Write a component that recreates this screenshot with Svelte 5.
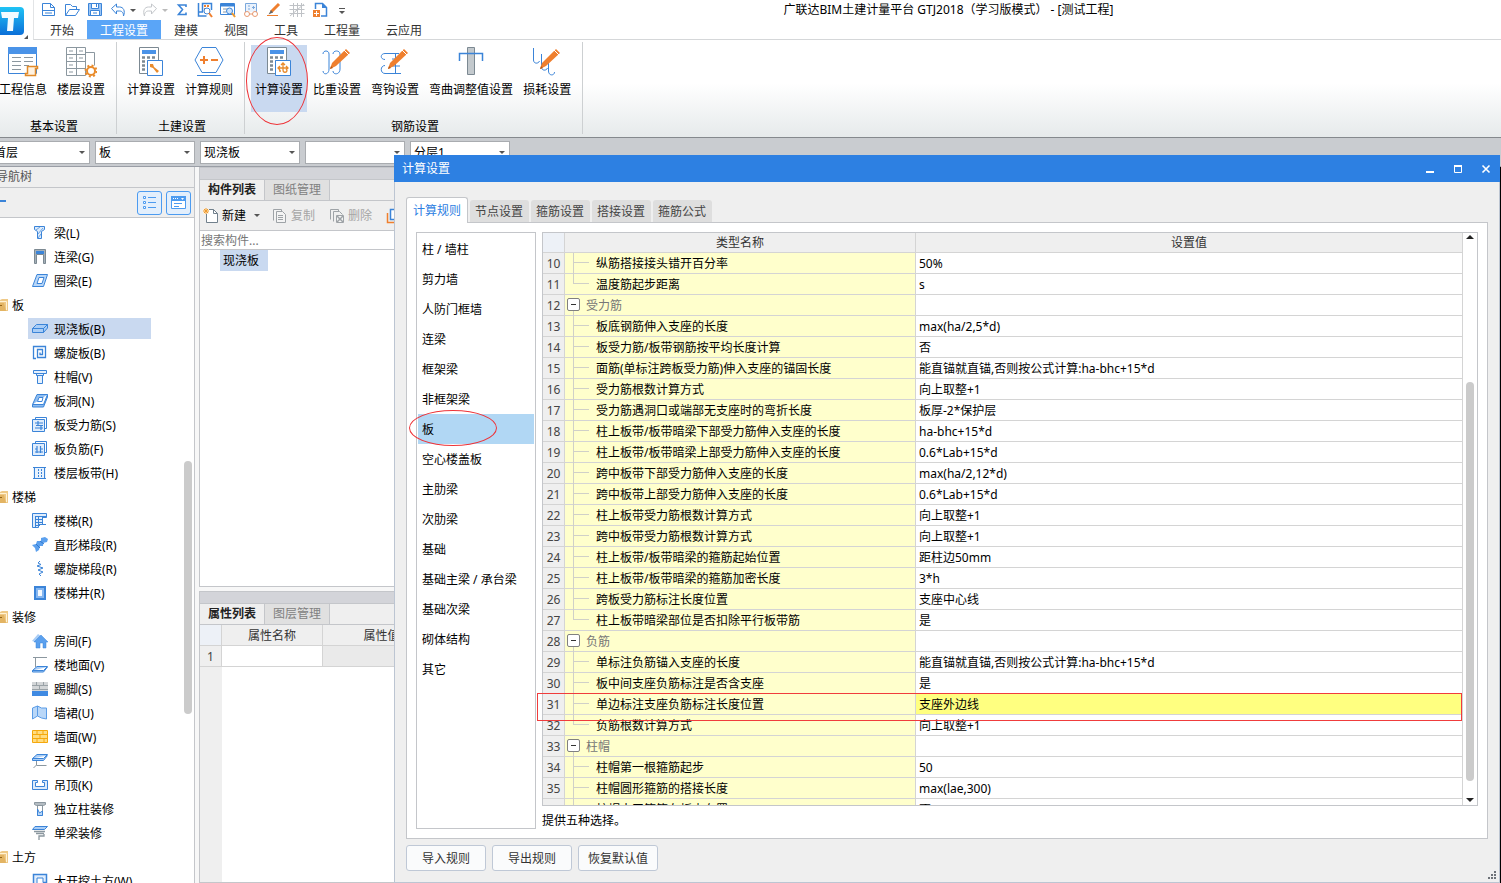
<script lang="ts">
  type TreeItem = { label: string; icon?: string }
  type Rule = { no: number; name: string; value?: string; group?: boolean; last?: boolean }

  const quickIcons = ['new', 'open', 'save', 'undo', 'redo', 'sum', 'calc', 'view', 'glasses', 'brush', 'mesh', 'export']

  const menuTabs = ['开始', '工程设置', '建模', '视图', '工具', '工程量', '云应用']
  let menuTab = $state('工程设置')

  const ribbonGroups = [
    {
      name: '基本设置',
      items: [
        { label: '工程信息', icon: 'info' },
        { label: '楼层设置', icon: 'floors' }
      ]
    },
    {
      name: '土建设置',
      items: [
        { label: '计算设置', icon: 'calcTool' },
        { label: '计算规则', icon: 'hexagon' }
      ]
    },
    {
      name: '钢筋设置',
      items: [
        { label: '计算设置', icon: 'calcRebar', active: true },
        { label: '比重设置', icon: 'weight' },
        { label: '弯钩设置', icon: 'hook' },
        { label: '弯曲调整值设置', icon: 'bend' },
        { label: '损耗设置', icon: 'loss' }
      ]
    }
  ]

  const filters = [
    { label: '楼层', value: '首层' },
    { label: '构件类型', value: '板' },
    { label: '构件', value: '现浇板' },
    { label: '名称', value: '' },
    { label: '分层', value: '分层1' }
  ]

  const tree: TreeItem[] = [
    { label: '梁(L)', icon: 'beam' },
    { label: '连梁(G)', icon: 'link' },
    { label: '圈梁(E)', icon: 'ring' },
    { label: '板' },
    { label: '现浇板(B)', icon: 'slab' },
    { label: '螺旋板(B)', icon: 'spiral' },
    { label: '柱帽(V)', icon: 'cap' },
    { label: '板洞(N)', icon: 'hole' },
    { label: '板受力筋(S)', icon: 'mainBar' },
    { label: '板负筋(F)', icon: 'topBar' },
    { label: '楼层板带(H)', icon: 'strip' },
    { label: '楼梯' },
    { label: '楼梯(R)', icon: 'stair' },
    { label: '直形梯段(R)', icon: 'flight' },
    { label: '螺旋梯段(R)', icon: 'helix' },
    { label: '楼梯井(R)', icon: 'well' },
    { label: '装修' },
    { label: '房间(F)', icon: 'room' },
    { label: '楼地面(V)', icon: 'ground' },
    { label: '踢脚(S)', icon: 'skirting' },
    { label: '墙裙(U)', icon: 'dado' },
    { label: '墙面(W)', icon: 'wall' },
    { label: '天棚(P)', icon: 'ceiling' },
    { label: '吊顶(K)', icon: 'hung' },
    { label: '独立柱装修', icon: 'column' },
    { label: '单梁装修', icon: 'beamDecor' },
    { label: '土方' },
    { label: '大开挖土方(W)', icon: 'dig' }
  ]
  let treeItem = $state('现浇板(B)')

  const dialogTabs = ['计算规则', '节点设置', '箍筋设置', '搭接设置', '箍筋公式']
  let dialogTab = $state('计算规则')

  const categories = [
    '柱 / 墙柱', '剪力墙', '人防门框墙', '连梁', '框架梁', '非框架梁', '板', '空心楼盖板',
    '主肋梁', '次肋梁', '基础', '基础主梁 / 承台梁', '基础次梁', '砌体结构', '其它'
  ]
  let category = $state('板')

  const rules: Rule[] = [
    { no: 10, name: '纵筋搭接接头错开百分率', value: '50%' },
    { no: 11, name: '温度筋起步距离', value: 's', last: true },
    { no: 12, name: '受力筋', group: true },
    { no: 13, name: '板底钢筋伸入支座的长度', value: 'max(ha/2,5*d)' },
    { no: 14, name: '板受力筋/板带钢筋按平均长度计算', value: '否' },
    { no: 15, name: '面筋(单标注跨板受力筋)伸入支座的锚固长度', value: '能直锚就直锚,否则按公式计算:ha-bhc+15*d' },
    { no: 16, name: '受力筋根数计算方式', value: '向上取整+1' },
    { no: 17, name: '受力筋遇洞口或端部无支座时的弯折长度', value: '板厚-2*保护层' },
    { no: 18, name: '柱上板带/板带暗梁下部受力筋伸入支座的长度', value: 'ha-bhc+15*d' },
    { no: 19, name: '柱上板带/板带暗梁上部受力筋伸入支座的长度', value: '0.6*Lab+15*d' },
    { no: 20, name: '跨中板带下部受力筋伸入支座的长度', value: 'max(ha/2,12*d)' },
    { no: 21, name: '跨中板带上部受力筋伸入支座的长度', value: '0.6*Lab+15*d' },
    { no: 22, name: '柱上板带受力筋根数计算方式', value: '向上取整+1' },
    { no: 23, name: '跨中板带受力筋根数计算方式', value: '向上取整+1' },
    { no: 24, name: '柱上板带/板带暗梁的箍筋起始位置', value: '距柱边50mm' },
    { no: 25, name: '柱上板带/板带暗梁的箍筋加密长度', value: '3*h' },
    { no: 26, name: '跨板受力筋标注长度位置', value: '支座中心线' },
    { no: 27, name: '柱上板带暗梁部位是否扣除平行板带筋', value: '是', last: true },
    { no: 28, name: '负筋', group: true },
    { no: 29, name: '单标注负筋锚入支座的长度', value: '能直锚就直锚,否则按公式计算:ha-bhc+15*d' },
    { no: 30, name: '板中间支座负筋标注是否含支座', value: '是' },
    { no: 31, name: '单边标注支座负筋标注长度位置', value: '支座外边线' },
    { no: 32, name: '负筋根数计算方式', value: '向上取整+1', last: true },
    { no: 33, name: '柱帽', group: true },
    { no: 34, name: '柱帽第一根箍筋起步', value: '50' },
    { no: 35, name: '柱帽圆形箍筋的搭接长度', value: 'max(lae,300)' },
    { no: 36, name: '柱帽水平箍筋在板内布置', value: '否' }
  ]

  // 16x16 glyphs
  const small: Record<string, string> = {
    new: '<path d="M1.500 1.500h8l4 4v8h-12z" fill="#fff" stroke="#3b84d8"/><path d="M9.500 1.500v4h4M2 8.500h11M4 11h7" fill="none" stroke="#3b84d8"/>',
    open: '<path d="M1.500 13.500v-11h5l2 2h4v3M1.500 13.500l4-6h10l-4 6z" fill="#fff" stroke="#3b84d8"/>',
    save: '<path d="M1.500 1.500h13v12h-13z" fill="#9dc6f5" stroke="#3b84d8"/><path d="M4.500 1.500h7v5h-7zM3.500 8.500h9v5h-9z" fill="#fff" stroke="#3b84d8"/><path d="M9.500 2v3M6 11h4" stroke="#3b84d8"/>',
    undo: '<path d="M1.500 6.500l5-4.500v3h3c4 0 6 4 4 9 0-4-2-5-4-5h-3v3z" fill="#fff" stroke="#3b84d8"/>',
    redo: '<path d="M14.500 6.500l-5-4.500v3h-3c-4 0-6 4-4 9 0-4 2-5 4-5h3v3z" fill="#fff" stroke="#c4c7cb"/>',
    sum: '<path d="M12 5V3H4.500l4 4.500-4 5H12v-2" fill="none" stroke="#3b84d8" stroke-width="1.600"/>',
    calc: '<path d="M1.500 1v13h8M1.500 10h4V1.500h9V8" fill="none" stroke="#3b84d8" stroke-width="1.500"/><path d="M7 4h6M7 7h3" stroke="#ef7f2e" stroke-width="2" stroke-dasharray="2 1"/><circle cx="10" cy="9" r="3" fill="#fff" stroke="#3b84d8"/><path d="M12 11l3 4" stroke="#ef7f2e" stroke-width="2"/>',
    view: '<path d="M.500 1.500h14v11H.500z" fill="#fff" stroke="#3b84d8"/><path d="M1 3h13" stroke="#3b84d8" stroke-width="3"/><path d="M3 7h4M3 10h3" stroke="#8796a3"/><circle cx="9.500" cy="9" r="3" fill="#cfe4fb" stroke="#3b84d8"/><path d="M12 11l3 4" stroke="#ef9b2e" stroke-width="2"/>',
    glasses: '<path d="M2.500 10V1.500h11V10" fill="#eaf2fc" stroke="#7ba8dc"/><path d="M5 4h2M5 7h2M9 5.500h3M10.500 4v3" stroke="#7ba8dc"/><circle cx="4" cy="12" r="2.500" fill="#fff" stroke="#e89a72"/><circle cx="12" cy="12" r="2.500" fill="#fff" stroke="#e89a72"/><path d="M6 12h4" stroke="#e89a72"/>',
    brush: '<path d="M13 2L5 10" stroke="#ef7f2e" stroke-width="3"/><path d="M5 8l-2.500 4.500 4.500-2z" fill="#666"/><path d="M1 13.500h11" stroke="#ef7f2e"/>',
    mesh: '<path d="M4.500 1v14M8.500 1v14M12.500 1v14M.500 3.500h15M.500 7.500h15M.500 11.500h15M1 14L15 2" stroke="#bfc2c6" fill="none"/>',
    export: '<path d="M3.500 7V1.500h7l4 4v8.500H9" fill="#fff" stroke="#3b84d8" stroke-width="1.500"/><path d="M10 1v5h5" fill="#3b84d8"/><path d="M1 8h7v7H1z" fill="#ef7f2e"/><path d="M2 11.500h5M4.500 9v5" stroke="#fff"/>',
    beam: '<path d="M2.500 1.500h10v3l-3 2v7h-4v-7l-3-2z" fill="#dcebfb" stroke="#3b84d8"/><path d="M4 5l4-3M6 9l5-6M6 13l3-4" stroke="#3b84d8" stroke-width=".700"/>',
    link: '<path d="M2.500 .500h11v14h-2V5.500h-7v9h-2z" fill="#a5b0b8" stroke="#7c8992"/><path d="M4 3.500h8" stroke="#3b84d8" stroke-width="3"/>',
    ring: '<path d="M5 1.500h10.500l-4 12H.500z" fill="#b9d7f8" stroke="#3b84d8"/><path d="M7 4.500h5l-2 6H5z" fill="#fff" stroke="#3b84d8"/>',
    slab: '<path d="M.500 7.500l4-4h11l-4 4zM.500 7.500h11v4H.500zM11.500 7.500l4-4v3.500l-4 4.500z" fill="#a9cdf6" stroke="#3b84d8"/>',
    spiral: '<path d="M4 13.500H1.500v-12h12v11h-8v-8h5v5h-2.500v-2" fill="none" stroke="#3b84d8" stroke-width="1.300"/>',
    cap: '<path d="M1.500 1.500h13v3h-3v2h-1v8h-5v-8h-1v-2h-3z" fill="#e6f1fd" stroke="#3b84d8"/><path d="M4 4.500h8M5 6.500h6" stroke="#3b84d8"/>',
    hole: '<path d="M5 1.500h10.500l-4 10H.500zM.500 11.500v2.500h11l4-10v-2.500" fill="#8fbdf0" stroke="#3b84d8"/><path d="M7 4.500h4l-1 4H5.500z" fill="#fff" stroke="#3b84d8"/>',
    mainBar: '<path d="M3.500 2.500v-2h11v11h-2" fill="#fff" stroke="#3b84d8"/><path d="M.500 2.500h12v12H.500z" fill="#e0edfc" stroke="#3b84d8"/><path d="M3 6h8M3 11h8M6 4v4M9 9v4M4 8.500h7" stroke="#3b84d8" stroke-width="1.200"/>',
    topBar: '<path d="M3.500 2.500v-2h11v11h-2" fill="#fff" stroke="#3b84d8"/><path d="M.500 2.500h12v12H.500z" fill="#e0edfc" stroke="#3b84d8"/><path d="M5 5v7M8.500 5v7M3 8h2M8 8h3M3 11h8" stroke="#3b84d8" stroke-width="1.200"/>',
    strip: '<path d="M1 2.500h13v11H1z" fill="#e8f2fd"/><path d="M1 2.500h13M1 13.500h13M2.500 3v10M12.500 3v10" stroke="#3b84d8"/><path d="M6.500 4v9M9.500 4v9" stroke="#3b84d8" stroke-dasharray="2 1"/>',
    stair: '<path d="M.500 14.500v-14h14v4h-4v7h-4v3z" fill="#e0edfc" stroke="#3b84d8"/><path d="M3 3.500h11M3.500 3v11M6.500 4v8M10.500 4v5M4 6.500h6M4 9.500h6M4 12.500h4M10 11.500h4" stroke="#3b84d8"/>',
    flight: '<path d="M0 8l4-1 1-3 4 0 0-3 4-1 3 2-1 3-4 1 0 3-3 0-1 4-3 2-1-4z" fill="#5ba0ee"/><path d="M4 7l4 4M8 4l4 3" stroke="#2f78cf"/>',
    helix: '<path d="M8 0L6 2l3 1.500L5 5l6 2-5 2 5 2-4 2 2 2" fill="none" stroke="#3b84d8"/>',
    well: '<path d="M3 2h10v12H3z" fill="#fff" stroke="#3b84d8" stroke-width="2"/><path d="M5 4h6v8H5z" fill="#f3f9ff" stroke="#85b6f0" stroke-width="2"/>',
    room: '<path d="M0 8l6-7 3 2-6 6z" fill="#a9cdf6"/><path d="M2 9l7-7 7 7h-2v6h-3v-5H8v5H4V9z" fill="#5ba0ee" stroke="#3b84d8" stroke-width=".500"/>',
    ground: '<path d="M1 .500h14M3.500 1v9" stroke="#8b979f"/><path d="M5 9.500h10.500l-4 4H.500zM.500 13.500v1.500h11l4-5" fill="#a9cdf6" stroke="#3b84d8"/>',
    skirting: '<path d="M0 1h16v9H0z" fill="#d3d6d8"/><path d="M0 4.500h16M0 8.500h16M4.500 1v3M11.500 1v3M7.500 5v3" stroke="#9aa2a7"/><path d="M0 10h16v5H0z" fill="#3f8ae2"/>',
    dado: '<path d="M.500 3l5-2v10l-5 3zM5.500 1l4 2h5v11l-5-1-4-2z" fill="#b9d7f8" stroke="#5b9ce6"/>',
    wall: '<path d="M.500 1.500h15v12H.500z" fill="#ffdc82" stroke="#f5a80c"/><path d="M0 5.500h16M0 9.500h16M5 2v4M11 2v4M8 6v4M5 10v4M12 10v4" stroke="#f5a80c"/>',
    ceiling: '<path d="M5 1.500h10.500l-4 4H.500zM.500 5.500v2h11l4-5" fill="#a9cdf6" stroke="#3b84d8"/><path d="M4.500 8v4l-3 3M4.500 12.500h10" fill="none" stroke="#8b979f"/>',
    hung: '<path d="M.500 3.500h5v2h-2v4h9v-4h-2v-2h5v9H.500z" fill="#dcebfb" stroke="#3b84d8"/>',
    column: '<path d="M2.500 1.500h11v2l-2 1h-7l-2-1z" fill="#b4bcc2" stroke="#8b979f"/><path d="M5.500 5v9.500h5V5" fill="#fff" stroke="#8b979f"/><path d="M5.500 8v6.500h5V10l-3 2z" fill="#b9d7f8" stroke="#3b84d8"/>',
    beamDecor: '<path d="M3 1.500h12.500l-3 3H.500z" fill="#a9cdf6" stroke="#3b84d8"/><path d="M2 6.500h11M4 8.500h8M12 9v2H7v4" fill="none" stroke="#8b979f" stroke-width="1.300"/>',
    dig: '<path d="M1.500 1.500h13v8h-3v3h-10z" fill="#e0edfc" stroke="#3b84d8" stroke-width="1.500"/><path d="M5 12V5h6v4" fill="#fff" stroke="#3b84d8"/>',
    folder: '<path d="M0 3h8l2-1h6v12H0z" fill="#efc987"/><path d="M8 4.500h6.500V13" fill="none" stroke="#fff3d6"/><path d="M8 6h4l2 8H8z" fill="#e3b463"/><path d="M8 8.500h2" stroke="#94651a"/>',
    create: '<path d="M3.500 1.500h7l4 4v9h-11z" fill="#fff" stroke="#71808c"/><path d="M10.500 1.500v4h4" fill="none" stroke="#71808c"/><path d="M0 1h6v5H0z" fill="#fdf1df"/><path d="M1 1l4 4M5 1L1 5M3 0v6M0 3h6" stroke="#ef9b2e"/>',
    copy: '<path d="M1.500 12.500v-11h8v2M4.500 3.500h6l3 3v8h-9z" fill="#f4f4f4" stroke="#9ea3a7"/><path d="M6 7.500h5M6 9.500h5M6 11.500h5" stroke="#9ea3a7"/>',
    remove: '<path d="M1.500 11.500v-10h8v2M4.500 13.500v-10h6l3 3" fill="none" stroke="#9ea3a7"/><path d="M7.500 7.500h7v7h-7z" fill="#f4f4f4" stroke="#9ea3a7"/><path d="M8 8l6 6M14 8l-6 6" stroke="#9ea3a7" stroke-width="1.500"/>',
    layers: '<path d="M1.500 5v9.500H10" fill="none" stroke="#ef7f2e" stroke-width="1.500"/><path d="M4.500 1.500h9v10h-9z" fill="#fff" stroke="#3b84d8" stroke-width="1.500"/>'
  }

  const calcBase =
    '<path d="M4.500 .500h19v26h-19z" fill="#fff" stroke="#7c8992"/><path d="M7 3h14v4H7z" fill="#4a93e8"/><path d="M7 10.500h14M7 14.500h14M7 18.500h9M7 22.500h9" stroke="#7c8992" stroke-width="2.500" stroke-dasharray="3 2"/><path d="M12.500 13.500h15v15h-15z" fill="#fff" stroke="#3b84d8"/>'
  const pencil =
    '<path d="M9 22l2-6L25 2l4 4-14 13z" fill="#ef7f2e"/><path d="M23 3l5 5" stroke="#fff"/><path d="M9 22l1-3 2 2z" fill="#b95a17"/>'

  // 32x32 glyphs
  const large: Record<string, string> = {
    info: '<path d="M1.500 .500h28v26h-28z" fill="#fff" stroke="#3b84d8"/><path d="M1 0h29v7H1z" fill="#4a93e8"/><path d="M5 10.500h9M17 10.500h9M5 14.500h9M17 14.500h9M5 18.500h9M17 18.500h5M5 22.500h9" stroke="#8b979f"/><path d="M20.500 19.500h10v2h-2v7h-10v-2h2z" fill="#fff3e2" stroke="#e08a2a" stroke-width="1.500"/>',
    floors: '<path d="M1.500 .500h19v28h-19zM20.500 5.500h9v13M1 7.500h19M1 14.500h19M1 21.500h19M11.500 0v28M4 4h4M14 4h4M4 11h4M14 11h4M4 18h4M4 25h4" fill="none" stroke="#8b979f"/><circle cx="26" cy="24" r="4" fill="#fff" stroke="#e98b2b" stroke-width="2"/><circle cx="26" cy="24" r="5.500" fill="none" stroke="#e98b2b" stroke-width="2" stroke-dasharray="2 2.300"/>',
    calcTool: calcBase + '<path d="M15 17l3 0 1 3 5 4-2 2-4-5-3-1z" fill="#e98b2b"/>',
    calcRebar: calcBase + '<path d="M15 21h10M20 16v7c0 3 4 3 4 0M17 19l-2 2 2 2M23 19l2 2-2 2M18 18l2-2 2 2M16 24h2" stroke="#e98b2b" stroke-width="1.300" fill="none"/>',
    hexagon: '<path d="M9 .500h14L30 13 23 25.500H9L2 13z" fill="#fff" stroke="#3b84d8"/><path d="M7 13h8M11 9v8M18 13h7" stroke="#ef7f2e" stroke-width="2"/><path d="M4 28.500h24" stroke="#3b84d8"/>',
    weight: '<path d="M2 7c0-4 6-4 6 0v15c0 6-6 6-6 2M12 7c0-4 7-4 7 0v15c0 6-7 6-7 2" fill="none" stroke="#3b84d8"/>' + pencil,
    hook: '<path d="M20 6.500H6c-5 0-5 6 0 6M22 26.500H6c-5 0-5-8 0-8M16.500 7v19M13 12h8M13 19h8" fill="none" stroke="#3b84d8"/>' + pencil,
    bend: '<path d="M12.500 .500h7v27h-7z" fill="#c3c9cd" stroke="#7c8992"/><path d="M4.500 14V6.500h23V14" fill="none" stroke="#3b84d8" stroke-width="1.500"/>',
    loss: '<path d="M2.500 1v12c0 4 5 4 6 1M10.500 7v13c0 4 5 4 6 1M17.500 16v8c0 5 6 5 6 1" fill="none" stroke="#3b84d8"/>' + pencil
  }
</script>

{#snippet glyph(body: string, size: number)}
  <svg class="glyph" width={size} height={size} viewBox="0 0 {size} {size}" aria-hidden="true">{@html body}</svg>
{/snippet}

<div class="app">
  <header class="top">
    <div class="logo">
      <svg width="33" height="40" viewBox="0 0 33 40" aria-hidden="true">
        <defs>
          <linearGradient id="logo" x1="0" y1="0" x2="0" y2="1">
            <stop offset="0" stop-color="#1fc3f5" />
            <stop offset="1" stop-color="#0b6fd8" />
          </linearGradient>
        </defs>
        <rect x="-8" y="7" width="32" height="28" rx="4" fill="url(#logo)" />
        <path d="M1 12h18l-1 6h-4l-1 13H7l1-13H2z" fill="#f2fbff" />
        <path d="M28 35v4h-4z" fill="#555" />
      </svg>
    </div>
    <div class="head">
      <div class="title-bar">
        <div class="quick">
          {#each quickIcons as icon}
            <button type="button" aria-label={icon}>{@render glyph(small[icon], 16)}</button>
            {#if icon === 'undo' || icon === 'redo'}
              <i class="caret" class:dim={icon === 'redo'}></i>
            {/if}
          {/each}
          <i class="caret bar"></i>
        </div>
        <h1>广联达BIM土建计量平台 GTJ2018（学习版模式） - [测试工程]</h1>
      </div>
      <nav class="menu">
        {#each menuTabs as tab}
          <button type="button" class:active={tab === menuTab} onclick={() => (menuTab = tab)}>{tab}</button>
        {/each}
      </nav>
    </div>
  </header>

  <section class="ribbon">
    {#each ribbonGroups as group}
      <div class="group">
        <div class="tools">
          {#each group.items as item}
            <button type="button" class:active={item.active}>
              {@render glyph(large[item.icon], 32)}
              <span>{item.label}</span>
              {#if item.active}<i class="mark-tool"></i>{/if}
            </button>
          {/each}
        </div>
        <div class="group-name">{group.name}</div>
      </div>
    {/each}
  </section>

  <div class="filters">
    {#each filters as filter}
      <div class="combo">
        <select aria-label={filter.label}>
          <option>{filter.value}</option>
        </select>
        <i class="caret"></i>
      </div>
    {/each}
  </div>

  <main class="body">
    <aside class="nav">
      <h2><span>导航树</span></h2>
      <div class="nav-tools">
        <i class="dash"></i>
        <button type="button" aria-label="列表视图">
          <svg width="15" height="15" viewBox="0 0 15 15" aria-hidden="true">
            <path d="M1.500 1.500h2v2h-2zM1.500 6.500h2v2h-2zM1.500 11.500h2v2h-2z" fill="#fff" stroke="#4c9bf0" />
            <path d="M6 2.500h8M6 7.500h8M6 12.500h8" stroke="#4c9bf0" />
          </svg>
        </button>
        <button type="button" aria-label="窗口视图">
          <svg width="15" height="15" viewBox="0 0 15 15" aria-hidden="true">
            <path d="M.500 1.500h14v12H.500z" fill="#fff" stroke="#4c9bf0" />
            <path d="M0 1h15v5H0z" fill="#4c9bf0" />
            <path d="M2 3.500h5" stroke="#fff" stroke-dasharray="1 1" />
            <path d="M10 3h3l-1.500 2z" fill="#fff" />
            <path d="M3 8.500h8M3 11.500h5" stroke="#4c9bf0" />
          </svg>
        </button>
      </div>
      <ul class="tree">
        {#each tree as item}
          <li class:folder={!item.icon}>
            <button type="button" class:active={item.label === treeItem} onclick={() => (treeItem = item.label)}>
              {@render glyph(small[item.icon ?? 'folder'], 16)}
              <span>{item.label}</span>
            </button>
          </li>
        {/each}
        <i class="thumb"></i>
      </ul>
    </aside>

    <div class="middle">
      <section class="pane components">
        <div class="grip"></div>
        <div class="pane-tabs">
          <button type="button" class="active">构件列表</button>
          <button type="button">图纸管理</button>
        </div>
        <div class="pane-tools">
          <button type="button">{@render glyph(small.create, 16)}新建<i class="caret"></i></button>
          <button type="button" disabled>{@render glyph(small.copy, 16)}复制</button>
          <button type="button" disabled>{@render glyph(small.remove, 16)}删除</button>
          <button type="button" aria-label="层间复制">{@render glyph(small.layers, 16)}</button>
        </div>
        <input type="text" aria-label="搜索构件" placeholder="搜索构件..." />
        <div class="list"><button type="button">现浇板</button></div>
      </section>
      <section class="pane props">
        <div class="grip"></div>
        <div class="pane-tabs">
          <button type="button" class="active">属性列表</button>
          <button type="button">图层管理</button>
        </div>
        <div class="prop-area">
          <table>
            <thead>
              <tr><th></th><th>属性名称</th><th>属性值</th></tr>
            </thead>
            <tbody>
              <tr><td>1</td><td></td><td></td></tr>
            </tbody>
          </table>
        </div>
      </section>
    </div>
  </main>

  <div class="dialog" role="dialog" aria-labelledby="dialog-title">
    <div class="dialog-title">
      <h2 id="dialog-title">计算设置</h2>
      <button type="button" aria-label="最小化">
        <svg width="10" height="10" viewBox="0 0 10 10"><path d="M1 8h8" stroke="#fff" stroke-width="2" /></svg>
      </button>
      <button type="button" aria-label="最大化">
        <svg width="10" height="10" viewBox="0 0 10 10"><path d="M1.500 2v6.500h7V2" fill="none" stroke="#fff" /><path d="M1 2h8" stroke="#fff" stroke-width="2" /></svg>
      </button>
      <button type="button" aria-label="关闭">
        <svg width="10" height="10" viewBox="0 0 10 10"><path d="M1.500 1.500l7 7M8.500 1.500l-7 7" stroke="#fff" stroke-width="1.600" /></svg>
      </button>
    </div>

    <div class="dialog-tabs">
      {#each dialogTabs as tab}
        <button type="button" class:active={tab === dialogTab} onclick={() => (dialogTab = tab)}>{tab}</button>
      {/each}
    </div>

    <div class="sheet">
      <ul class="categories">
        {#each categories as name}
          <li>
            <button type="button" class:active={name === category} onclick={() => (category = name)}>
              {name}
              {#if name === '板'}<i class="mark-category"></i>{/if}
            </button>
          </li>
        {/each}
      </ul>

      <div class="rules">
        <div class="grid">
          <div class="scroll">
            <table>
              <thead>
                <tr><th></th><th>类型名称</th><th>设置值</th></tr>
              </thead>
              <tbody>
                {#each rules as rule}
                  <tr class:group-row={rule.group} class:last={rule.last} class:current={rule.no === 31}>
                    <td>{rule.no}</td>
                    <td>
                      {#if rule.group}<button type="button" aria-label="折叠"></button>{/if}{rule.name}
                    </td>
                    <td>{rule.value ?? ''}</td>
                  </tr>
                {/each}
              </tbody>
            </table>
          </div>
          <div class="scrollbar">
            <i class="up"></i>
            <i class="grid-thumb"></i>
            <i class="down"></i>
          </div>
          <i class="mark-row"></i>
        </div>
        <p>提供五种选择。</p>
      </div>
    </div>

    <footer>
      <button type="button">导入规则</button>
      <button type="button">导出规则</button>
      <button type="button">恢复默认值</button>
      <svg class="resize" width="9" height="9" viewBox="0 0 9 9" aria-hidden="true">
        <path d="M6 0h2v2H6zM3 3h2v2H3zM6 3h2v2H6zM0 6h2v2H0zM3 6h2v2H3zM6 6h2v2H6z" fill="#6d7278" />
      </svg>
    </footer>
  </div>
</div>

<style>
  :global(body) {
    margin: 0;
  }

  .app {
    position: relative;
    display: flex;
    flex-direction: column;
    height: 100vh;
    overflow: hidden;
    background: #fff;
    color: #000;
    font: 12px/18px 'Noto Sans', 'Noto Sans CJK SC', sans-serif;
  }

  .app * {
    box-sizing: border-box;
  }

  button,
  select,
  input {
    margin: 0;
    padding: 0;
    border: 0;
    border-radius: 0;
    background: none;
    color: inherit;
    font: inherit;
    text-align: left;
    white-space: nowrap;
  }

  h1,
  h2,
  p,
  ul {
    margin: 0;
    padding: 0;
    font: inherit;
    list-style: none;
  }

  svg {
    display: block;
    flex: none;
  }

  .caret {
    flex: none;
    width: 0;
    border: 3px solid transparent;
    border-top-color: #555;
    border-bottom: 0;
  }

  .caret.dim {
    border-top-color: #bbb;
  }

  .caret.bar {
    position: relative;
    top: 2px;
  }

  .caret.bar::before {
    position: absolute;
    top: -6px;
    left: -3px;
    width: 6px;
    height: 1px;
    background: #555;
    content: '';
  }

  /* title and menu */
  .top {
    display: flex;
    flex: none;
    height: 40px;
  }

  .head {
    flex: 1;
    border-bottom: 1px solid #d5d7d9;
    border-left: 1px solid #e2e4e6;
  }

  .title-bar {
    display: flex;
    align-items: center;
    height: 20px;
  }

  .quick {
    display: flex;
    align-items: center;
    gap: 7px;
    padding-left: 7px;
  }

  .quick .caret {
    margin-left: -3px;
    margin-right: -1px;
  }

  .quick .caret.bar {
    margin-left: 4px;
  }

  .title-bar h1 {
    flex: 1;
    padding-left: 52px;
    text-align: center;
  }

  .menu {
    display: flex;
    height: 19px;
    padding-left: 3px;
    color: #333;
  }

  .menu button {
    padding: 2px 13px 0;
  }

  .menu .active {
    background: #5aa5f7;
    color: #fff;
  }

  /* ribbon */
  .ribbon {
    display: flex;
    flex: none;
    height: 98px;
    padding-top: 2px;
    border-bottom: 1px solid #85898d;
    background: linear-gradient(#fff 45%, #e6eaeb);
  }

  .group {
    display: flex;
    flex-direction: column;
    margin-bottom: 3px;
    padding: 3px 7px 0 6px;
    border-right: 1px solid #cdd0d2;
  }

  .group:first-child {
    margin-left: -11px;
  }

  .tools {
    display: flex;
    gap: 2px;
  }

  .tools button {
    position: relative;
    display: flex;
    flex-direction: column;
    align-items: center;
    gap: 2px;
    height: 67px;
    padding: 2px 4px 0;
  }

  .tools .active {
    background: #c9d9f0;
  }

  .group-name {
    padding: 6px 0 0 4px;
    text-align: center;
  }

  .mark-tool {
    position: absolute;
    top: -8px;
    left: -5px;
    z-index: 1;
    width: 62px;
    height: 88px;
    border: 1px solid #ee3338;
    border-radius: 50%;
  }

  /* filter bar */
  .filters {
    display: flex;
    flex: none;
    gap: 5px;
    height: 29px;
    padding: 3px 0 2px;
    border-bottom: 1px solid #9a9ea6;
    background: #c9ccd0;
  }

  .combo {
    position: relative;
    width: 100px;
  }

  .combo:first-child {
    margin-left: -10px;
  }

  .combo select {
    width: 100%;
    height: 23px;
    padding: 0 16px 0 3px;
    border: 1px solid #a9acb0;
    background: #fff;
    appearance: none;
  }

  .combo .caret {
    position: absolute;
    top: 10px;
    right: 5px;
  }

  .body {
    display: flex;
    flex: 1;
    gap: 4px;
    min-height: 0;
    background: #000;
  }

  /* navigation tree */
  .nav {
    display: flex;
    flex: none;
    flex-direction: column;
    width: 195px;
    border-right: 1px solid #c4c6ca;
    background: #fff;
    box-shadow: 4px 0 #f7f7f7;
  }

  .nav h2 {
    height: 21px;
    border-bottom: 1px solid #c4c6ca;
    background: #efefef;
    color: #555;
    line-height: 20px;
  }

  .nav h2 span {
    margin-left: -4px;
  }

  .nav-tools {
    display: flex;
    gap: 4px;
    align-items: center;
    height: 30px;
    padding-right: 3px;
    border-bottom: 1px solid #c4c6ca;
    background: #efefef;
  }

  .dash {
    width: 6px;
    height: 2px;
    margin: 0 auto 4px 0;
    background: #3b84d8;
  }

  .nav-tools button {
    display: flex;
    align-items: center;
    justify-content: center;
    width: 25px;
    height: 24px;
    border: 1px solid #4c9bf0;
    border-radius: 3px;
    background: #e3effc;
  }

  .tree {
    position: relative;
    flex: 1;
    padding-top: 3px;
    overflow: hidden;
  }

  .tree li {
    display: flex;
    height: 24px;
    padding-left: 28px;
  }

  .tree button {
    display: flex;
    align-items: center;
    gap: 6px;
    width: 123px;
    height: 21px;
    margin-top: 1px;
    padding-left: 4px;
  }

  .tree button span {
    padding-top: 2px;
  }

  .tree .folder {
    padding-left: 0;
  }

  .tree .folder button {
    gap: 4px;
    margin-left: -12px;
  }

  .tree .active {
    background: #c9d9f0;
  }

  .thumb {
    position: absolute;
    top: 243px;
    right: 2px;
    width: 8px;
    height: 253px;
    border-radius: 4px;
    background: #cbcbcb;
  }

  /* component and property panes */
  .middle {
    display: flex;
    flex-direction: column;
    gap: 4px;
    width: 243px;
    background: #f7f7f7;
  }

  .pane {
    display: flex;
    flex-direction: column;
    border: 1px solid #c4c6ca;
    background: #fff;
  }

  .components {
    height: 420px;
  }

  .props {
    flex: 1;
  }

  .grip {
    height: 11px;
    background: #d3d4d9;
  }

  .pane-tabs {
    display: flex;
    height: 22px;
    border-top: 1px solid #c4c6ca;
    border-bottom: 1px solid #c4c6ca;
    background: #efefef;
    color: #808080;
  }

  .pane-tabs button {
    padding: 0 8px;
    border-right: 1px solid #c4c6ca;
    background: #e0e0e0;
  }

  .pane-tabs .active {
    background: #efefef;
    color: #222;
    font-weight: bold;
  }

  .pane-tools {
    display: flex;
    align-items: center;
    gap: 14px;
    height: 30px;
    padding-left: 3px;
    border-bottom: 1px solid #c4c6ca;
    background: #efefef;
  }

  .pane-tools button {
    display: flex;
    align-items: center;
    gap: 3px;
  }

  .pane-tools .caret {
    margin: 0 -2px 0 5px;
  }

  .pane-tools button:disabled {
    color: #a6a6a6;
  }

  .pane input {
    height: 19px;
    padding-left: 1px;
    border-bottom: 1px solid #c4c6ca;
    outline: none;
  }

  .pane input::placeholder {
    color: #777;
    opacity: 1;
  }

  .list {
    padding-left: 20px;
  }

  .list button {
    height: 21px;
    padding: 0 9px 0 3px;
    background: #c9d9f0;
  }

  .prop-area {
    flex: 1;
    background: linear-gradient(90deg, #efefef 22px, #fff 22px);
  }

  table {
    width: 100%;
    border-spacing: 0;
    table-layout: fixed;
  }

  th,
  td {
    height: 21px;
    padding: 2px 0 0;
    border-right: 1px solid #d4d4d4;
    border-bottom: 1px solid #d4d4d4;
    line-height: 18px;
    white-space: nowrap;
  }

  th {
    background: #efefef;
    color: #333;
    font-weight: normal;
    text-align: center;
  }

  th:first-child {
    width: 22px;
    background: #edf1f7;
  }

  td:first-child {
    background: #efefef;
    color: #444;
    text-align: center;
  }

  .prop-area th:nth-child(2) {
    width: 101px;
  }

  .prop-area td:last-child {
    background: #eaeaea;
  }

  /* settings dialog */
  .dialog {
    position: absolute;
    top: 155px;
    right: 1px;
    bottom: 0;
    left: 394px;
    display: flex;
    flex-direction: column;
    border: 1px solid #bcc5d2;
    border-top: 0;
    background: #efefef;
  }

  .dialog-title {
    display: flex;
    flex: none;
    align-items: center;
    gap: 18px;
    height: 27px;
    margin: 0 -1px;
    padding: 0 9px 0 8px;
    background: #2d80e2;
    color: #fff;
  }

  .dialog-title h2 {
    flex: 1;
  }

  .dialog-tabs {
    display: flex;
    flex: none;
    align-items: flex-end;
    gap: 2px;
    margin: 15px 11px -1px;
    color: #444;
  }

  .dialog-tabs button {
    height: 22px;
    margin-bottom: 1px;
    padding: 1px 6px 0 5px;
    border-radius: 3px 3px 0 0;
    background: #dedede;
  }

  .dialog-tabs .active {
    z-index: 1;
    height: 26px;
    margin-bottom: 0;
    padding: 0 6px;
    border: 1px solid #c4c6ca;
    border-bottom: 0;
    background: #fff;
    color: #2d80e2;
  }

  .sheet {
    display: flex;
    flex: 1;
    gap: 6px;
    min-height: 0;
    margin: 0 11px;
    padding: 9px;
    border: 1px solid #c4c6ca;
    background: #fff;
  }

  .categories {
    flex: none;
    width: 120px;
    padding: 1px;
    border: 1px solid #c4c6ca;
  }

  .categories button {
    position: relative;
    width: 100%;
    height: 30px;
    padding: 2px 0 0 4px;
  }

  .categories .active {
    background: #b1d7f4;
  }

  .mark-category {
    position: absolute;
    top: -4px;
    left: -9px;
    width: 88px;
    height: 36px;
    border: 1px solid #ee3338;
    border-radius: 50%;
  }

  .rules {
    display: flex;
    flex: 1;
    flex-direction: column;
    min-width: 0;
  }

  .grid {
    position: relative;
    display: flex;
    flex: 1;
    min-height: 0;
    border: 1px solid #c4c6ca;
  }

  .scroll {
    flex: 1;
    min-width: 0;
    overflow: hidden;
  }

  .scroll th {
    height: 20px;
    padding-top: 1px;
  }

  .scroll th:nth-child(2) {
    width: 351px;
  }

  .scroll td:nth-child(2) {
    position: relative;
    padding-left: 31px;
    background: #ffffcc;
  }

  .scroll td:nth-child(2)::before {
    position: absolute;
    top: 0;
    bottom: -1px;
    left: 8px;
    width: 1px;
    background: #d0d0c8;
    content: '';
  }

  .scroll td:nth-child(2)::after {
    position: absolute;
    top: 9px;
    left: 9px;
    width: 15px;
    height: 1px;
    background: #d0d0c8;
    content: '';
  }

  .scroll .last td:nth-child(2)::before {
    bottom: 10px;
  }

  .scroll .group-row td:nth-child(2) {
    padding-left: 21px;
    color: #777;
  }

  .scroll .group-row td:nth-child(2)::before {
    top: 16px;
  }

  .scroll .group-row td:nth-child(2)::after {
    display: none;
  }

  .group-row button {
    position: absolute;
    top: 3px;
    left: 2px;
    width: 13px;
    height: 13px;
    border: 1px solid #808080;
    border-radius: 2px;
    background: linear-gradient(#333, #333) center / 5px 1px no-repeat #fff;
  }

  .scroll td:last-child {
    padding-left: 3px;
  }

  .current td:last-child {
    background: #ffff80;
  }

  .scrollbar {
    position: relative;
    display: flex;
    flex: none;
    flex-direction: column;
    align-items: center;
    justify-content: space-between;
    width: 14px;
    padding: 2px 0 3px;
  }

  .up,
  .down {
    border: 4px solid transparent;
    border-top-width: 0;
    border-bottom-color: #222;
  }

  .down {
    border-top: 4px solid #222;
    border-bottom: 0;
  }

  .grid-thumb {
    position: absolute;
    top: 26%;
    bottom: 24px;
    width: 8px;
    border-radius: 4px;
    background: #cbcbcb;
  }

  .mark-row {
    position: absolute;
    top: 460px;
    right: 15px;
    left: -6px;
    height: 28px;
    border: 1px solid #f03c3c;
  }

  .rules p {
    height: 23px;
    padding-top: 6px;
  }

  footer {
    display: flex;
    flex: none;
    gap: 6px;
    height: 43px;
    padding: 6px 2px 0 11px;
  }

  footer button {
    width: 80px;
    height: 26px;
    padding-top: 2px;
    border: 1px solid #bfc8d6;
    border-radius: 3px;
    background: #fafbfc;
    color: #333;
    text-align: center;
  }

  .resize {
    align-self: flex-end;
    margin: 0 0 2px auto;
  }
</style>
